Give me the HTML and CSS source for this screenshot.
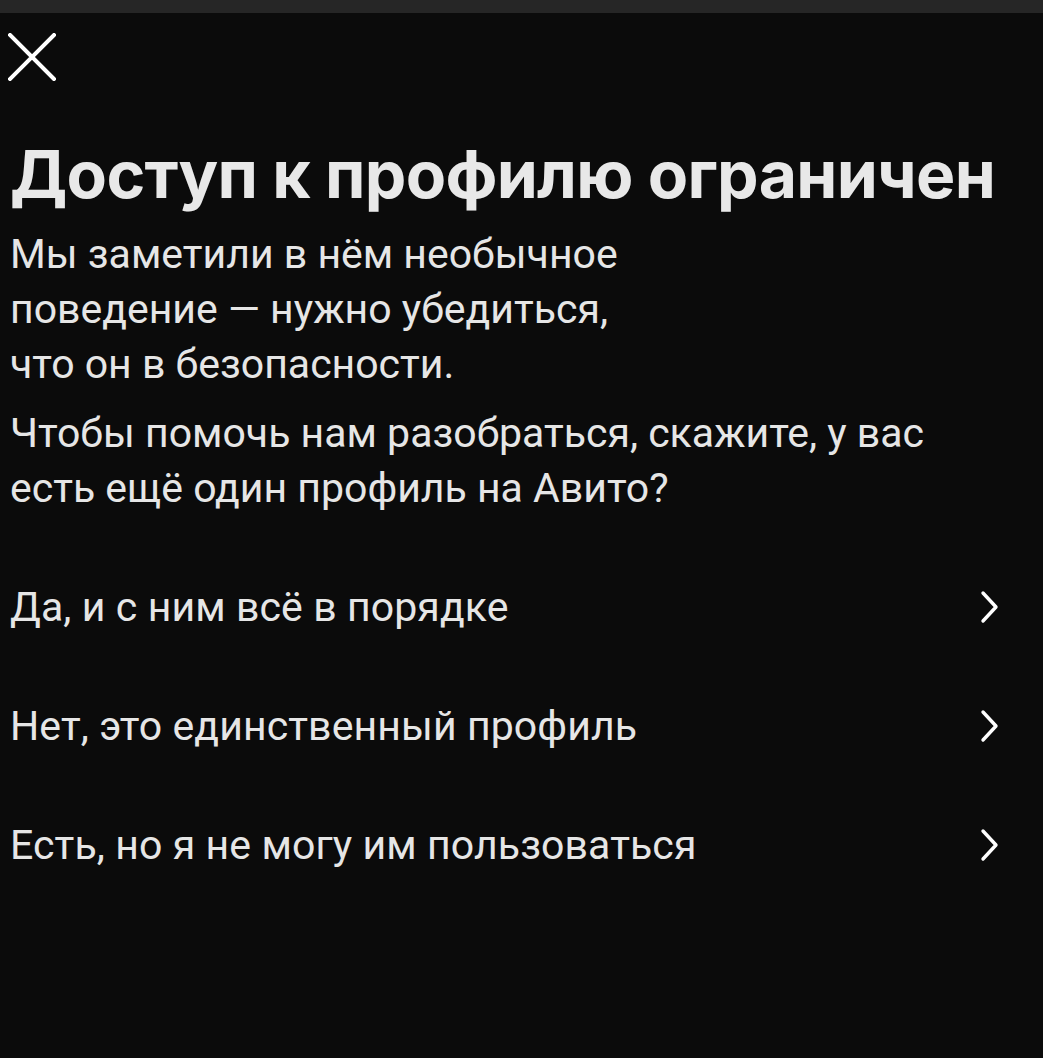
FILE: index.html
```html
<!DOCTYPE html>
<html lang="ru">
<head>
<meta charset="utf-8">
<title>Доступ к профилю ограничен</title>
<link rel="stylesheet" href="styles.css">
</head>
<body>
<div class="statusbar"></div>
<main class="sheet">
  <button class="close" aria-label="Закрыть">
    <svg width="48" height="48" viewBox="0 0 48 48"><path d="M2 2L46 46M46 2L2 46" stroke="#fff" stroke-width="4" stroke-linecap="square" fill="none"/></svg>
  </button>
  <h1 class="title">Доступ к профилю ограничен</h1>
  <p class="text">Мы заметили в нём необычное<br>поведение — нужно убедиться,<br>что он в безопасности.</p>
  <p class="text">Чтобы помочь нам разобраться, скажите, у вас есть ещё один профиль на Авито?</p>
  <ul class="options">
    <li class="option"><span>Да, и с ним всё в порядке</span><svg class="chev" width="20" height="34" viewBox="0 0 20 34"><path d="M3 3L16 17L3 31" stroke="#fff" stroke-width="3.4" stroke-linecap="round" stroke-linejoin="round" fill="none"/></svg></li>
    <li class="option"><span>Нет, это единственный профиль</span><svg class="chev" width="20" height="34" viewBox="0 0 20 34"><path d="M3 3L16 17L3 31" stroke="#fff" stroke-width="3.4" stroke-linecap="round" stroke-linejoin="round" fill="none"/></svg></li>
    <li class="option"><span>Есть, но я не могу им пользоваться</span><svg class="chev" width="20" height="34" viewBox="0 0 20 34"><path d="M3 3L16 17L3 31" stroke="#fff" stroke-width="3.4" stroke-linecap="round" stroke-linejoin="round" fill="none"/></svg></li>
  </ul>
</main>
</body>
</html>
```

FILE: styles.css
```css
html, body {
  margin: 0;
  background: #0b0b0b;
  height: 100%;
}
body {
  font-family: Roboto, "Noto Sans", sans-serif;
  color: #e6e6e6;
}
.statusbar {
  height: 13px;
  background: #262626;
}
.sheet {
  padding: 20px 43px 0 10px;
}
.close {
  display: block;
  background: none;
  border: 0;
  padding: 0;
  margin: 0 0 0 -2px;
  width: 48px;
  height: 48px;
  cursor: pointer;
}
.close svg { display: block; }
.title {
  font-family: Inter, sans-serif;
  font-weight: 700;
  font-size: 66px;
  line-height: 76px;
  letter-spacing: -0.7px;
  margin: 55px 0 15px;
  color: #e8e8e8;
  white-space: nowrap;
}
.text {
  max-width: 960px;
  font-size: 41px;
  line-height: 55px;
  letter-spacing: 0;
  margin: 0 0 14px;
  color: #e6e6e6;
}
.options {
  list-style: none;
  margin: 31px 0 0;
  padding: 0;
}
.option {
  display: flex;
  align-items: center;
  justify-content: space-between;
  height: 119px;
  font-size: 41px;
  letter-spacing: 0.1px;
  color: #e6e6e6;
}
.chev { display: block; }
```
